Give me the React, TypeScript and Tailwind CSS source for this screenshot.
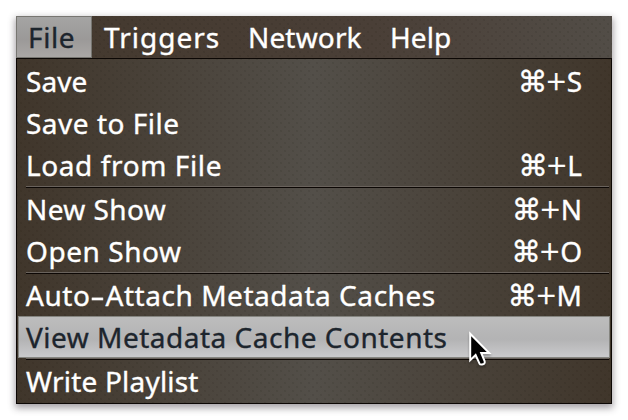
const FONT = "font-['Noto_Sans','Open_Sans',sans-serif]";

const DOTS =
  'bg-[radial-gradient(circle_at_50%_50%,rgba(20,14,8,0.13)_0,rgba(20,14,8,0.07)_0.9px,transparent_1.5px),radial-gradient(circle_at_50%_50%,rgba(20,14,8,0.13)_0,rgba(20,14,8,0.07)_0.9px,transparent_1.5px)] bg-[size:8px_8px] bg-[position:0_0,4px_4px]';

type Item = { label: string; keyName?: string; tracking: string; active?: boolean };

const groups: Item[][] = [
  [
    { label: 'Save', keyName: 'S', tracking: 'tracking-[0.1px]' },
    { label: 'Save to File', tracking: 'tracking-[0.5px]' },
    { label: 'Load from File', keyName: 'L', tracking: 'tracking-[0.6px]' },
  ],
  [
    { label: 'New Show', keyName: 'N', tracking: 'tracking-[0.4px]' },
    { label: 'Open Show', keyName: 'O', tracking: 'tracking-[0.55px]' },
  ],
  [
    { label: 'Auto-Attach Metadata Caches', keyName: 'M', tracking: 'tracking-[0.55px]' },
    { label: 'View Metadata Cache Contents', tracking: 'tracking-[0.5px]', active: true },
  ],
  [{ label: 'Write Playlist', tracking: 'tracking-[0.2px]' }],
];

function Label({ text }: { text: string }) {
  const [head, tail] = text.split('-');
  if (!tail) return <>{text}</>;
  return (
    <>
      {head}
      <span className="inline-block w-[15px] text-center">
        <span className="inline-block scale-x-160">-</span>
      </span>
      {tail}
    </>
  );
}

function Row({ item }: { item: Item }) {
  return (
    <div
      className={`flex h-[42px] items-center justify-between pl-2 pr-[28px] ${
        item.active
          ? 'bg-linear-to-b from-[#bdbdbd] via-[#b3b3b4] via-55% to-[#cbcbcd] text-[#1d252d] shadow-[inset_0_0_0_1px_#858580]'
          : 'text-white'
      }`}
    >
      <span className={`whitespace-pre leading-[42px] ${item.tracking}`}>
        <Label text={item.label} />
      </span>
      {item.keyName && (
        <span className="flex items-center leading-[42px]">
          <span className="relative top-px w-[28px] font-['DejaVu_Sans',sans-serif] text-[29.5px] leading-[42px]">
            ⌘
          </span>
          <span className="w-[21px] text-center text-[34px] font-light leading-[42px] [-webkit-text-stroke:0.7px_currentColor]">
            +
          </span>
          {item.keyName}
        </span>
      )}
    </div>
  );
}

export default function App() {
  return (
    <div
      className={`h-[420px] w-[628px] overflow-hidden bg-white px-4 pt-4 text-[28px] [-webkit-text-stroke:0.35px_currentColor] ${FONT}`}
    >
      <div className="h-[388px] w-[596px] shadow-[0_3px_7px_1px_rgba(40,30,40,0.42)]">
        <div className="h-[42px] bg-linear-to-r from-[#43382d] from-0% via-[#4a3f37] via-60% to-[#524d47]">
          <div className={`flex h-[42px] text-white ${DOTS}`}>
            <div className="w-[76px] bg-linear-to-b from-[#a5a5a4] via-[#9b9998] via-55% to-[#aba8a6] pl-3 leading-[42px] tracking-[0.6px] text-[#1d252d] shadow-[inset_0_0_0_1px_#777671]">
              File
            </div>
            <div className="w-[144px] pl-3 leading-[42px] tracking-[1px]">Triggers</div>
            <div className="w-[142px] pl-3 leading-[42px] tracking-[0.15px]">Network</div>
            <div className="pl-3 leading-[42px] tracking-[0.1px]">Help</div>
          </div>
        </div>
        <div className="h-[346px] border border-[#0c0704] bg-linear-to-r from-[#40362b] from-0% via-[#534f49] via-50% to-[#40362b]">
          <div className={`h-[344px] p-px ${DOTS}`}>
            {groups.map((group, g) => (
              <div key={g}>
                {g > 0 && (
                  <div className="mr-px ml-2 h-[2px] border-t border-b border-t-[#69625c] border-b-[#0c0704]" />
                )}
                {group.map((item) => (
                  <Row key={item.label} item={item} />
                ))}
              </div>
            ))}
          </div>
        </div>
      </div>
      <svg
        className="absolute top-[328px] left-[464px] drop-shadow-[0_2px_1px_rgba(0,0,0,0.3)]"
        width="30"
        height="42"
        viewBox="0 0 30 42"
      >
        <path
          d="M6.2 5.8V32.2L11.6 27L15.4 35.4C16.6 37.6 21.8 36.4 20.6 33.2L17.2 25H25.2Z"
          fill="#000"
          stroke="#fff"
          strokeWidth="2"
        />
      </svg>
    </div>
  );
}
